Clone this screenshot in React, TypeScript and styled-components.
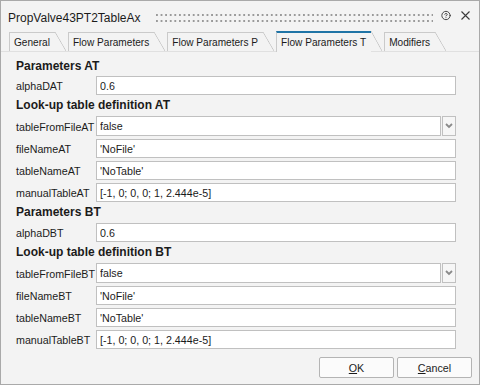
import React from 'react';
import styled, { createGlobalStyle } from 'styled-components';
import { CircleHelp } from 'lucide-react';

const Global = createGlobalStyle`
  html, body { margin: 0; padding: 0; background: #ffffff; }
  body { font-family: "Liberation Sans", Arial, sans-serif; }
  * { box-sizing: border-box; }
`;

const Window = styled.div`
  width: 480px;
  height: 385px;
  border: 1px solid #a9a9a9;
  background: #f3f3f3;
  display: flex;
  flex-direction: column;
  color: #1b1b1b;
  font-size: 10.7px;
  overflow: hidden;
`;

const TitleBar = styled.div`
  height: 30px;
  padding: 4px 9px 0 7px;
  display: flex;
  align-items: center;
`;

const Title = styled.div`
  font-size: 12px;
  white-space: nowrap;
  margin-right: 15px;
`;

const Grip = styled.div`
  flex: 1;
  height: 8px;
  margin-top: 0px;
  margin-right: 8px;
  background-image:
    linear-gradient(to right, #9a9a9a 0 2px, transparent 2px),
    linear-gradient(to right, #9a9a9a 0 2px, transparent 2px);
  background-size: 4.6px 2px, 4.6px 2px;
  background-position: 0 0, 0 6px;
  background-repeat: repeat-x;
`;

const IconBox = styled.span`
  display: inline-flex;
  align-items: center;
  justify-content: center;
  width: 10px;
  height: 10px;
  margin-top: -5px;
  color: #3a3a3a;
  & + & { margin-left: 9px; }
`;

const TabStrip = styled.div`
  height: 21px;
  display: flex;
  align-items: flex-end;
  padding-left: 8px;
  border-bottom: 1px solid #e0e0e0;
`;

const Tab = styled.div<{ $active?: boolean }>`
  position: relative;
  height: ${p => (p.$active ? 21 : 19)}px;
  margin-bottom: ${p => (p.$active ? -1 : 0)}px;
  padding: 0 5px ${p => (p.$active ? 1 : 0)}px 4px;
  margin-right: 13px;
  border-left: 1px solid #cacaca;
  border-top: ${p => (p.$active ? '2px solid #1f74a6' : '1px solid #cacaca')};
  background: #f3f3f3;
  font-size: 10.1px;
  display: flex;
  align-items: center;
  white-space: nowrap;
  &::after {
    content: '';
    position: absolute;
    top: ${p => (p.$active ? -2 : -1)}px;
    right: -11px;
    width: 11px;
    bottom: ${p => (p.$active ? 1 : 0)}px;
    background: linear-gradient(
      to top right,
      transparent calc(50% - 0.7px),
      #c6c6c6 50%,
      transparent calc(50% + 0.7px)
    );
  }
`;

const Body = styled.div`
  flex: 1;
  padding: 4px 23px 0 15px;
  display: flex;
  flex-direction: column;
`;

const Heading = styled.div<{ $first?: boolean }>`
  height: ${p => (p.$first ? 20 : 21)}px;
  line-height: 20px;
  font-weight: bold;
  font-size: 12px;
  white-space: nowrap;
`;

const Row = styled.div<{ $combo?: boolean }>`
  display: grid;
  grid-template-columns: 80px 1fr;
  align-items: center;
  height: ${p => (p.$combo ? 20 : 19)}px;
  & + & { margin-top: 3px; }
`;

const Label = styled.span`
  white-space: nowrap;
  padding-top: 1px;
`;

const Field = styled.input`
  height: 100%;
  width: 100%;
  min-width: 0;
  border: 1px solid #c0c0c0;
  background: #ffffff;
  padding: 0 0 0 3px;
  font: inherit;
  color: #1b1b1b;
  outline: none;
`;

const Combo = styled.div`
  display: flex;
  height: 100%;
`;

const DropButton = styled.div`
  width: 15px;
  height: 100%;
  border: 1px solid #c0c0c0;
  margin-left: 1px;
  background: #f6f6f6;
  display: flex;
  align-items: center;
  justify-content: center;
`;

const Footer = styled.div`
  display: flex;
  justify-content: flex-end;
  gap: 3px;
  padding: 0 7px 6px 0;
`;

const Button = styled.button`
  width: 75px;
  height: 21px;
  border: 1px solid #b4b4b4;
  border-radius: 2px;
  background: #fbfbfb;
  font: inherit;
  font-size: 10.7px;
  color: #1b1b1b;
  padding: 0;
`;

const Chevron = () => (
  <svg width="8" height="6" viewBox="0 0 8 6">
    <polyline points="1,1 4,4 7,1" fill="none" stroke="#8a8a8a" strokeWidth="1.8" />
  </svg>
);

const CloseIcon = () => (
  <svg width="9" height="9" viewBox="0 0 9 9">
    <path d="M0.5 0.5 L8.5 8.5 M8.5 0.5 L0.5 8.5" stroke="#3a3a3a" strokeWidth="1.1" />
  </svg>
);

type Item = { label: string; value: string; combo?: boolean };

const groups: { title: string; items: Item[] }[] = [
  { title: 'Parameters AT', items: [{ label: 'alphaDAT', value: '0.6' }] },
  {
    title: 'Look-up table definition AT',
    items: [
      { label: 'tableFromFileAT', value: 'false', combo: true },
      { label: 'fileNameAT', value: "'NoFile'" },
      { label: 'tableNameAT', value: "'NoTable'" },
      { label: 'manualTableAT', value: '[-1, 0; 0, 0; 1, 2.444e-5]' },
    ],
  },
  { title: 'Parameters BT', items: [{ label: 'alphaDBT', value: '0.6' }] },
  {
    title: 'Look-up table definition BT',
    items: [
      { label: 'tableFromFileBT', value: 'false', combo: true },
      { label: 'fileNameBT', value: "'NoFile'" },
      { label: 'tableNameBT', value: "'NoTable'" },
      { label: 'manualTableBT', value: '[-1, 0; 0, 0; 1, 2.444e-5]' },
    ],
  },
];

const tabs = ['General', 'Flow Parameters', 'Flow Parameters P', 'Flow Parameters T', 'Modifiers'];

export default function App() {
  return (
    <>
      <Global />
      <Window>
        <TitleBar>
          <Title>PropValve43PT2TableAx</Title>
          <Grip />
          <IconBox>
            <CircleHelp size={11} strokeWidth={2.2} />
          </IconBox>
          <IconBox>
            <CloseIcon />
          </IconBox>
        </TitleBar>
        <TabStrip>
          {tabs.map(t => (
            <Tab key={t} $active={t === 'Flow Parameters T'}>
              {t}
            </Tab>
          ))}
        </TabStrip>
        <Body>
          {groups.map((g, gi) => (
            <React.Fragment key={g.title}>
              <Heading $first={gi === 0}>{g.title}</Heading>
              <div>
                {g.items.map(it => (
                  <Row key={it.label} $combo={it.combo}>
                    <Label>{it.label}</Label>
                    {it.combo ? (
                      <Combo>
                        <Field readOnly value={it.value} />
                        <DropButton>
                          <Chevron />
                        </DropButton>
                      </Combo>
                    ) : (
                      <Field readOnly value={it.value} />
                    )}
                  </Row>
                ))}
              </div>
            </React.Fragment>
          ))}
        </Body>
        <Footer>
          <Button>
            <u>O</u>K
          </Button>
          <Button>
            <u>C</u>ancel
          </Button>
        </Footer>
      </Window>
    </>
  );
}
